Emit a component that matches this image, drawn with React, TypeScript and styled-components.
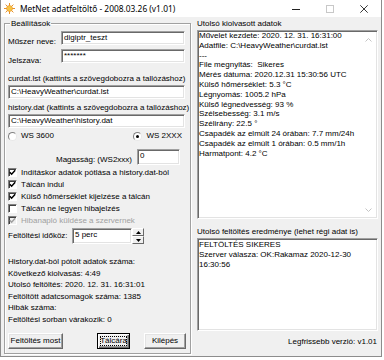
import React from 'react';
import styled, { createGlobalStyle } from 'styled-components';

const GlobalStyle = createGlobalStyle`
  html, body { margin: 0; padding: 0; background: #ffffff; }
  body {
    font-family: "Liberation Sans", Arial, sans-serif;
    font-size: 8px;
    color: #000;
  }
  #root { width: 384px; height: 360px; overflow: hidden; }
  * { box-sizing: border-box; }
`;

const Window = styled.div`
  width: 382px;
  height: 357px;
  background: #f0f0f0;
  border: 1px solid #8c8c8c;
  border-top: 0;
  display: flex;
  flex-direction: column;
`;

const TitleBar = styled.div`
  height: 17px;
  flex: none;
  background: #ffffff;
  display: flex;
  align-items: center;
`;

const IconWrap = styled.div`
  width: 11px;
  height: 11px;
  margin-left: 3px;
  display: flex;
`;

const TitleText = styled.div`
  flex: 1;
  margin-left: 5px;
  font-family: "Noto Sans", "Open Sans", sans-serif;
  font-size: 8.4px;
  line-height: 17px;
  color: #000;
  white-space: nowrap;
`;

const Controls = styled.div`
  display: flex;
  height: 100%;
`;

const CtrlBtn = styled.div`
  width: 34px;
  height: 100%;
  display: flex;
  align-items: center;
  justify-content: center;
`;

const Body = styled.div`
  flex: 1;
  display: flex;
  align-items: flex-start;
  padding: 2px 0 0 3px;
`;

const GroupBox = styled.div`
  width: 187px;
  margin-top: 4px;
  border: 1px solid #a0a0a0;
  box-shadow: inset 1px 1px 0 #ffffff, 1px 1px 0 #ffffff;
  padding: 0 5px 4px 3px;
  display: flex;
  flex-direction: column;
`;

const Legend = styled.div`
  align-self: flex-start;
  margin: -5px 0 0 2px;
  padding: 0 1px;
  background: #f0f0f0;
  line-height: 10px;
`;

const FieldRow = styled.div<{ $mt: number }>`
  display: grid;
  grid-template-columns: 53px 1fr;
  align-items: start;
  margin-top: ${(p) => p.$mt}px;
`;

const Label = styled.span<{ $pt?: number; $mr?: number }>`
  display: block;
  line-height: 10px;
  padding-top: ${(p) => p.$pt ?? 0}px;
  margin-right: ${(p) => p.$mr ?? 0}px;
  white-space: nowrap;
`;

const Caption = styled.div<{ $mt: number }>`
  line-height: 10px;
  margin-top: ${(p) => p.$mt}px;
  white-space: nowrap;
`;

const Edit = styled.div<{ $mt?: number; $h?: number; $w?: number }>`
  height: ${(p) => p.$h ?? 14}px;
  ${(p) => (p.$w ? `width: ${p.$w}px;` : '')}
  margin-top: ${(p) => p.$mt ?? 0}px;
  background: #ffffff;
  border: 1px solid;
  border-color: #a0a0a0 #ffffff #ffffff #a0a0a0;
  box-shadow: inset 1px 1px 0 #696969, inset -1px -1px 0 #e3e3e3;
  padding: 0 0 0 2px;
  line-height: 11px;
  white-space: nowrap;
  overflow: hidden;
`;

const RadioRow = styled.div`
  display: flex;
  justify-content: space-between;
  margin-top: 3px;
  height: 10px;
  padding-right: 3px;
`;

const OptionItem = styled.div`
  display: flex;
  align-items: center;
  gap: 4px;
  line-height: 10px;
`;

const RadioCircle = styled.span<{ $checked?: boolean }>`
  width: 9px;
  height: 9px;
  border-radius: 50%;
  background: #ffffff;
  border: 1px solid;
  border-color: #808080 #e8e8e8 #e8e8e8 #808080;
  display: flex;
  align-items: center;
  justify-content: center;
  &::after {
    content: '';
    width: 3px;
    height: 3px;
    border-radius: 50%;
    background: ${(p) => (p.$checked ? '#000' : 'transparent')};
  }
`;

const HeightRow = styled.div`
  display: flex;
  justify-content: flex-end;
  align-items: flex-start;
  margin-top: 8px;
  padding-right: 5px;
`;

const CheckRow = styled.div<{ $mt?: number; $disabled?: boolean }>`
  display: flex;
  align-items: center;
  gap: 4px;
  height: 12px;
  margin-top: ${(p) => p.$mt ?? 0}px;
  color: ${(p) => (p.$disabled ? '#a0a0a0' : '#000')};
  white-space: nowrap;
`;

const CheckBox = styled.span<{ $disabled?: boolean }>`
  width: 9px;
  height: 9px;
  flex: none;
  background: ${(p) => (p.$disabled ? '#f0f0f0' : '#ffffff')};
  border: 1px solid;
  border-color: #808080 #ffffff #ffffff #808080;
  box-shadow: inset 1px 1px 0 #404040;
  display: flex;
  align-items: center;
  justify-content: center;
`;

const IntervalRow = styled.div`
  display: grid;
  grid-template-columns: 64px 60px 12px;
  margin-top: 2px;
  height: 16px;
`;

const Spinner = styled.div`
  display: flex;
  flex-direction: column;
  height: 16px;
`;

const SpinBtn = styled.div`
  flex: 1;
  background: #f0f0f0;
  border: 1px solid;
  border-color: #ffffff #696969 #696969 #ffffff;
  display: flex;
  align-items: center;
  justify-content: center;
`;

const Status = styled.div`
  margin-top: 12px;
  line-height: 11.6px;
  white-space: nowrap;
`;

const ButtonRow = styled.div`
  display: flex;
  margin-top: 7px;
  height: 16px;
  margin-right: -1px;
`;

const Button = styled.div<{ $w: number; $ml?: string; $default?: boolean }>`
  width: ${(p) => p.$w}px;
  height: 16px;
  margin-left: ${(p) => p.$ml ?? '0'};
  background: #f0f0f0;
  border: 1px solid;
  border-color: ${(p) => (p.$default ? '#000 #000 #000 #000' : '#ffffff #696969 #696969 #ffffff')};
  box-shadow: ${(p) =>
    p.$default
      ? 'inset 1px 1px 0 #ffffff, inset -1px -1px 0 #696969, inset -2px -2px 0 #a0a0a0'
      : 'inset -1px -1px 0 #a0a0a0, inset 1px 1px 0 #e3e3e3'};
  display: flex;
  align-items: center;
  justify-content: center;
  line-height: 10px;
  white-space: nowrap;
  padding: 2px;
`;

const FocusRect = styled.span`
  flex: 1;
  align-self: stretch;
  display: flex;
  align-items: center;
  justify-content: center;
  outline: 1px dotted #000;
  outline-offset: -1px;
`;

const RightCol = styled.div`
  width: 181px;
  margin-left: 6px;
  display: flex;
  flex-direction: column;
`;

const Memo = styled.div<{ $h: number; $mt: number }>`
  height: ${(p) => p.$h}px;
  margin-top: ${(p) => p.$mt}px;
  background: #ffffff;
  border: 1px solid;
  border-color: #a0a0a0 #ffffff #ffffff #a0a0a0;
  box-shadow: inset 1px 1px 0 #696969, inset -1px -1px 0 #e3e3e3;
  display: flex;
`;

const MemoText = styled.div<{ $pt?: number }>`
  flex: 1;
  padding: ${(p) => p.$pt ?? 0}px 0 0 1px;
  line-height: 9.8px;
  white-space: pre;
  overflow: hidden;
`;

const ScrollBar = styled.div`
  width: 15px;
  margin: 1px 1px 1px 0;
  display: flex;
  flex-direction: column;
  justify-content: space-between;
`;

const ScrollArrow = styled.div`
  height: 15px;
  display: flex;
  align-items: center;
  justify-content: center;
`;

const Version = styled.div`
  margin-top: 6px;
  line-height: 10px;
  text-align: right;
  padding-right: 1px;
`;

const AppIcon = () => (
  <svg width="11" height="11" viewBox="0 0 11 11">
    <g stroke="#e8912a" strokeWidth="1">
      <line x1="5.5" y1="0" x2="5.5" y2="11" />
      <line x1="0" y1="5.5" x2="11" y2="5.5" />
      <line x1="1.6" y1="1.6" x2="9.4" y2="9.4" />
      <line x1="9.4" y1="1.6" x2="1.6" y2="9.4" />
    </g>
    <circle cx="5.5" cy="5.5" r="3" fill="#f6c445" stroke="#e8912a" strokeWidth="0.6" />
  </svg>
);

const Check = ({ color }: { color: string }) => (
  <svg width="7" height="7" viewBox="0 0 7 7">
    <path d="M0.8 3.3 L2.6 5.2 L6.2 1.2" stroke={color} strokeWidth="1.5" fill="none" />
  </svg>
);

const Chevron = ({ up }: { up?: boolean }) => (
  <svg width="7" height="4" viewBox="0 0 7 4">
    <path d={up ? 'M0.5 3.5 L3.5 0.5 L6.5 3.5' : 'M0.5 0.5 L3.5 3.5 L6.5 0.5'} stroke="#c4c4c4" strokeWidth="1" fill="none" />
  </svg>
);

const Tri = ({ up }: { up?: boolean }) => (
  <svg width="5" height="3" viewBox="0 0 5 3">
    <path d={up ? 'M0 3 L2.5 0 L5 3 Z' : 'M0 0 L2.5 3 L5 0 Z'} fill="#000" />
  </svg>
);

const checks: { text: string; checked: boolean; disabled?: boolean }[] = [
  { text: 'Indításkor adatok pótlása a history.dat-ból', checked: true },
  { text: 'Tálcán indul', checked: true },
  { text: 'Külső hőmérséklet kijelzése a tálcán', checked: true },
  { text: 'Tálcán ne legyen hibajelzés', checked: false },
  { text: 'Hibanapló küldése a szervernek', checked: true, disabled: true },
];

const statusLines = [
  'History.dat-ból pótolt adatok száma:',
  'Következő kiolvasás: 4:49',
  'Utolsó feltöltés: 2020. 12. 31. 16:31:01',
  'Feltöltött adatcsomagok száma: 1385',
  'Hibák száma:',
  'Feltöltési sorban várakozik: 0',
];

const memoLines = [
  'Művelet kezdete: 2020. 12. 31. 16:31:00',
  'Adatfile: C:\\HeavyWeather\\curdat.lst',
  '---',
  'File megnyitás:  Sikeres',
  'Mérés dátuma: 2020.12.31 15:30:56 UTC',
  'Külső hőmérséklet: 5.3 °C',
  'Légnyomás: 1005.2 hPa',
  'Külső légnedvesség: 93 %',
  'Szélsebesség: 3.1 m/s',
  'Szélirány: 22.5 °',
  'Csapadék az elmúlt 24 órában: 7.7 mm/24h',
  'Csapadék az elmúlt 1 órában: 0.5 mm/1h',
  'Harmatpont: 4.2 °C',
];

const resultLines = ['FELTÖLTÉS SIKERES', 'Szerver válasza: OK:Rakamaz 2020-12-30', '16:30:56'];

export default function App() {
  return (
    <>
      <GlobalStyle />
      <Window>
        <TitleBar>
          <IconWrap>
            <AppIcon />
          </IconWrap>
          <TitleText>MetNet adatfeltöltő - 2008.03.26 (v1.01)</TitleText>
          <Controls>
            <CtrlBtn>
              <svg width="8" height="8" viewBox="0 0 8 8">
                <line x1="0" y1="4.5" x2="8" y2="4.5" stroke="#222" strokeWidth="1" />
              </svg>
            </CtrlBtn>
            <CtrlBtn>
              <svg width="8" height="8" viewBox="0 0 8 8">
                <rect x="0.5" y="0.5" width="7" height="7" fill="none" stroke="#c8c8c8" strokeWidth="1" />
              </svg>
            </CtrlBtn>
            <CtrlBtn>
              <svg width="8" height="8" viewBox="0 0 8 8">
                <path d="M0.3 0.3 L7.7 7.7 M7.7 0.3 L0.3 7.7" stroke="#222" strokeWidth="0.9" />
              </svg>
            </CtrlBtn>
          </Controls>
        </TitleBar>
        <Body>
          <GroupBox>
            <Legend>Beállítások</Legend>
            <FieldRow $mt={2}>
              <Label $pt={6}>Műszer neve:</Label>
              <Edit>digiptr_teszt</Edit>
            </FieldRow>
            <FieldRow $mt={2}>
              <Label $pt={7}>Jelszava:</Label>
              <Edit>*******</Edit>
            </FieldRow>
            <Caption $mt={8}>curdat.lst (kattints a szövegdobozra a tallózáshoz)</Caption>
            <Edit $mt={1}>C:\HeavyWeather\curdat.lst</Edit>
            <Caption $mt={4}>history.dat (kattints a szövegdobozra a tallózáshoz)</Caption>
            <Edit $mt={1}>C:\HeavyWeather\history.dat</Edit>
            <RadioRow>
              <OptionItem>
                <RadioCircle />
                <span>WS 3600</span>
              </OptionItem>
              <OptionItem>
                <RadioCircle $checked />
                <span>WS 2XXX</span>
              </OptionItem>
            </RadioRow>
            <HeightRow>
              <Label $pt={6} $mr={5}>
                Magasság: (WS2xxx)
              </Label>
              <Edit $w={43} $h={16}>
                0
              </Edit>
            </HeightRow>
            {checks.map((c, i) => (
              <CheckRow key={c.text} $mt={i === 0 ? 1 : 0} $disabled={c.disabled}>
                <CheckBox $disabled={c.disabled}>
                  {c.checked && <Check color={c.disabled ? '#a0a0a0' : '#000'} />}
                </CheckBox>
                <span>{c.text}</span>
              </CheckRow>
            ))}
            <IntervalRow>
              <Label $pt={3}>Feltöltési időköz:</Label>
              <Edit $h={16}>5 perc</Edit>
              <Spinner>
                <SpinBtn>
                  <Tri up />
                </SpinBtn>
                <SpinBtn>
                  <Tri />
                </SpinBtn>
              </Spinner>
            </IntervalRow>
            <Status>
              {statusLines.map((l) => (
                <div key={l}>{l}</div>
              ))}
            </Status>
            <ButtonRow>
              <Button $w={55}>Feltöltés most</Button>
              <Button $w={33} $ml="auto" $default>
                <FocusRect>Tálcára</FocusRect>
              </Button>
              <Button $w={42} $ml="14px">
                Kilépés
              </Button>
            </ButtonRow>
          </GroupBox>
          <RightCol>
            <Caption $mt={0}>Utolsó kiolvasott adatok</Caption>
            <Memo $h={189} $mt={1}>
              <MemoText>{memoLines.join('\n')}</MemoText>
              <ScrollBar>
                <ScrollArrow>
                  <Chevron up />
                </ScrollArrow>
                <ScrollArrow>
                  <Chevron />
                </ScrollArrow>
              </ScrollBar>
            </Memo>
            <Caption $mt={8}>Utolsó feltöltés eredménye (lehet régi adat is)</Caption>
            <Memo $h={93} $mt={1}>
              <MemoText $pt={1}>{resultLines.join('\n')}</MemoText>
            </Memo>
            <Version>Legfrissebb verzió: v1.01</Version>
          </RightCol>
        </Body>
      </Window>
    </>
  );
}
